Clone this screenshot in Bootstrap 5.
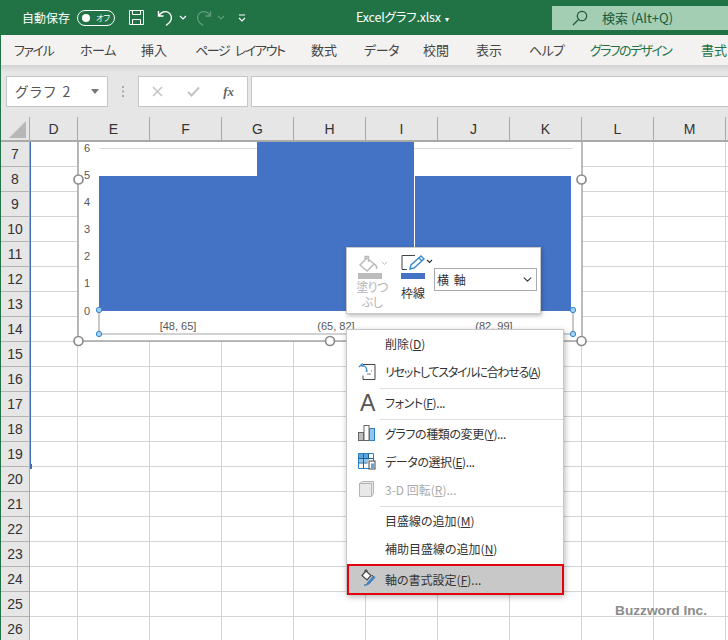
<!DOCTYPE html>
<html lang="ja"><head><meta charset="utf-8"><title>Excel</title>
<link href="https://cdn.jsdelivr.net/npm/bootstrap@5.3.0/dist/css/bootstrap.min.css" rel="stylesheet">
<style>
html,body{width:728px;height:640px;overflow:hidden}
body{background:#217346;font-family:"Noto Sans CJK JP","Noto Sans",sans-serif;font-feature-settings:"palt";color:#333;font-size:12px}
.xl-title{height:35px;color:#fff;padding-left:22px}
.xl-toggle{width:38px;height:16px;border:1px solid #fff;border-radius:8px;margin-left:7px;padding-left:4px;font-size:8px;gap:6px}
.xl-toggle i{width:8px;height:8px;border-radius:50%;background:#fff}
.xl-name{position:absolute;left:356px;top:8px;line-height:18px;font-size:12.5px;letter-spacing:-.2px}
.xl-search{position:absolute;left:552px;top:6px;width:176px;height:24px;background:#a3ceb4;color:#1f5a3a;padding-left:20px;gap:14px}
.xl-search span{font-size:13px}
.xl-tabs{height:30px;background:#f3f2f1;margin-left:1px;padding-left:13px;font-size:13px;white-space:nowrap;color:#444}
.xl-tabs span{flex:none}
.xl-tabs span:nth-child(1){width:66px;letter-spacing:-1.4px}
.xl-tabs span:nth-child(2){width:61px;letter-spacing:-.4px}
.xl-tabs span:nth-child(3){width:54px}
.xl-tabs span:nth-child(4){width:116px;letter-spacing:-1.4px;word-spacing:4px}
.xl-tabs span:nth-child(5){width:53px}
.xl-tabs span:nth-child(6){width:59px;letter-spacing:-.4px}
.xl-tabs span:nth-child(7){width:53px}
.xl-tabs span:nth-child(8){width:53px}
.xl-tabs span:nth-child(9){width:61px;letter-spacing:-.6px}
.xl-tabs span:nth-child(10){width:111px;letter-spacing:-1.6px}
.xl-tabs span.xl-green{color:#217346}
.xl-fbar{height:52px;margin-left:1px;background:linear-gradient(#d2d2d2,#e6e6e6 7px);padding:11px 0 10px 5px}
.xl-box{background:#fff;border:1px solid #c6c6c6;height:31px}
.xl-namebox{width:102px;padding:0 8px;font-size:14px;letter-spacing:2px;color:#555}
.xl-grip{width:30px;color:#999}
.xl-fx{width:110px;padding:0 13px 0 13px;color:#bbb}
.xl-input{margin-left:3px;flex:1;border-right:0}
.xl-heads{height:25px;margin-left:1px;background:#e6e6e6;border-bottom:2px solid #a9a9a9;font-size:14px;font-family:"Liberation Sans",sans-serif}
.xl-corner{width:29px;position:relative;border-right:1px solid #a9a9a9}
.xl-corner::after{content:"";position:absolute;left:8px;top:4px;border-style:solid;border-width:0 0 17px 17px;border-color:transparent transparent #b7b7b7 transparent}
.xl-col{width:72px;border-right:1px solid #a9a9a9;text-align:center;line-height:24px;flex:none}
.xl-col.xl-d{width:48px}
.xl-sheet{height:498px;margin-left:1px;background:#fff;position:relative;overflow:hidden}
.xl-rows{width:29px;background:#e6e6e6;border-right:1px solid #a9a9a9;font-family:"Liberation Sans",sans-serif;font-size:14px;flex:none}
.xl-rows div{height:25px;line-height:24px;text-align:center;border-bottom:1px solid #b4b4b4}
.xl-cells{flex:1;background-image:linear-gradient(90deg,#d4d4d4 1px,transparent 1px),linear-gradient(#d4d4d4 1px,transparent 1px);background-size:72px 25px;background-position:47px 0,0 24px}
.xl-chart{position:absolute;left:0;top:0}
.xl-chart text{font-family:"Liberation Sans",sans-serif;font-size:11px;fill:#595959}
.xl-mark{position:absolute;left:29px;top:0;width:1px;height:325px;background:#3f6fb5}
.xl-mark::after{content:"";position:absolute;left:0;top:322px;width:2px;height:5px;background:#3f6fb5}
.xl-mini{position:absolute;left:345px;top:105px;width:195px;height:67px;background:#fff;border:1px solid #c8c8c8;box-shadow:1px 2px 4px rgba(0,0,0,.25);padding:6px 3px 0 9px}
.xl-fill{width:32px;text-align:center;color:#b4b4b4;line-height:15px;margin-right:13px;white-space:nowrap;letter-spacing:-.6px}
.xl-fill svg,.xl-line svg{display:block}
.xl-fill div{height:15px}
.xl-line{width:33px;text-align:center;line-height:15px}
.xl-line div{margin-top:6px;margin-right:9px}
.xl-mini .form-select{width:103px;height:23px;margin:14px 0 0 0;padding:0 0 0 2px;border-radius:0;border-color:#aaa;font-size:12px;color:#333;letter-spacing:1px;background-position:right 3px center;background-size:11px 9px;font-family:inherit}
.xl-menu.dropdown-menu{display:block;position:absolute;left:345px;top:187px;width:218px;min-width:0;padding:0;border:1px solid #c6c6c6;border-radius:0;box-shadow:1px 2px 6px rgba(0,0,0,.28);font-size:12px;color:#333}
.xl-menu .dropdown-item{height:28px;padding:0 0 0 38px;line-height:28px;color:#333;position:relative;white-space:nowrap}
.xl-menu .dropdown-item.disabled{color:#aaa}
.xl-menu .xl-k{letter-spacing:-1.25px}
.xl-menu .xl-k2{letter-spacing:-.4px}
.xl-menu .dropdown-divider{margin:2px 0 0 33px;border-color:#ddd;height:1px}
.xl-menu .xl-hit{height:31px;line-height:27px;background:#c8c8c8;border:2px solid #e3000f;margin:1px -1px -1px 0;padding-left:36px;width:217px}
.xl-ico{position:absolute;left:11px;top:4px}
.xl-hit .xl-ico{left:10px;top:3px}
.xl-a{position:absolute;left:13px;top:0;font-size:23px;line-height:28px;font-family:"Liberation Sans",sans-serif;color:#555}
.xl-wm{position:absolute;left:614px;top:460px;font-family:"Liberation Sans",sans-serif;font-weight:700;font-size:13.7px;color:#8c8c8c;line-height:18px}
.xl-cursor{position:absolute;left:536px;top:434px}
.xl-fx i{font-family:"Liberation Serif",serif;font-weight:700;font-size:13px;color:#666}
.xl-name small{font-size:8px;margin-left:2px}
.xl-s1{margin-left:13px}.xl-s2{margin-left:12px}.xl-s3{margin-left:5px}.xl-s4{margin-left:8px}
</style></head>
<body>
<div class="xl-title d-flex align-items-center position-relative">
  <span>自動保存</span>
  <span class="xl-toggle d-flex align-items-center"><i></i><span>オフ</span></span>
  <svg class="xl-s1" width="17" height="17" viewBox="0 0 17 17" fill="none" stroke="#fff"><path d="M1.5 1.5h14v14h-14zM4.5 1.5v4h8v-4M4.5 15.500v-5h8v5"/></svg>
  <svg class="xl-s2" width="17" height="18" viewBox="0 0 17 18" fill="none" stroke="#fff" stroke-width="1.4"><path d="M1.500 2v5h5M1.800 6.800C4 3 8 1.500 11.500 3.500c3.500 2.200 4 6.600 1 10L9 16.500"/></svg>
  <svg class="xl-s3" width="8" height="5" viewBox="0 0 8 5" fill="none" stroke="#fff" stroke-width="1.200"><path d="M1 1l3 3 3-3"/></svg>
  <svg class="xl-s4" width="17" height="18" viewBox="0 0 17 18" fill="none" stroke="#5f9c7d" stroke-width="1.300"><path d="M15.500 2v5h-5M15.200 6.800C13 3 9 1.500 5.500 3.500c-3.500 2.200-4 6.600-1 10l3.500 3"/></svg>
  <svg class="xl-s3" width="8" height="5" viewBox="0 0 8 5" fill="none" stroke="#5f9c7d" stroke-width="1.200"><path d="M1 1l3 3 3-3"/></svg>
  <svg class="xl-s1" width="8" height="8" viewBox="0 0 8 8" fill="none" stroke="#fff" stroke-width="1.200"><path d="M1 1h6M1 4l3 3 3-3"/></svg>
  <span class="xl-name">Excelグラフ.xlsx <small>&#9662;</small></span>
  <div class="xl-search d-flex align-items-center">
    <svg width="16" height="16" viewBox="0 0 16 16" fill="none" stroke="#1f5a3a" stroke-width="1.200"><circle cx="10" cy="6" r="4.700"/><path d="M6.500 9.500L1 15"/></svg>
    <span>検索 (Alt+Q)</span>
  </div>
</div>
<nav class="xl-tabs d-flex align-items-center">
  <span>ファイル</span><span>ホーム</span><span>挿入</span><span>ページ レイアウト</span><span>数式</span><span>データ</span><span>校閲</span><span>表示</span><span>ヘルプ</span><span class="xl-green">グラフのデザイン</span><span class="xl-green">書式</span>
</nav>
<div class="xl-fbar d-flex">
  <div class="xl-box xl-namebox d-flex align-items-center justify-content-between"><span>グラフ 2</span><svg width="8" height="5" viewBox="0 0 8 5"><path d="M0 0h8L4 5z" fill="#777"/></svg></div>
  <div class="xl-grip d-flex align-items-center justify-content-center"><svg width="2" height="11" viewBox="0 0 2 11" fill="#aaa"><rect width="2" height="2"/><rect y="4.500" width="2" height="2"/><rect y="9" width="2" height="2"/></svg></div>
  <div class="xl-box xl-fx d-flex align-items-center justify-content-between">
    <svg width="11" height="11" viewBox="0 0 11 11" stroke="#c4c4c4" stroke-width="1.500"><path d="M1 1l9 9M10 1l-9 9"/></svg>
    <svg width="13" height="11" viewBox="0 0 13 11" fill="none" stroke="#c4c4c4" stroke-width="2"><path d="M1 6l3.500 3.500L12 1.500"/></svg>
    <i>fx</i>
  </div>
  <div class="xl-box xl-input"></div>
</div>
<div class="xl-heads d-flex">
  <div class="xl-corner"></div>
  <div class="xl-col xl-d">D</div><div class="xl-col">E</div><div class="xl-col">F</div><div class="xl-col">G</div><div class="xl-col">H</div><div class="xl-col">I</div><div class="xl-col">J</div><div class="xl-col">K</div><div class="xl-col">L</div><div class="xl-col">M</div>
</div>
<main class="xl-sheet d-flex">
  <div class="xl-rows">
    <div>7</div><div>8</div><div>9</div><div>10</div><div>11</div><div>12</div><div>13</div><div>14</div><div>15</div><div>16</div><div>17</div><div>18</div><div>19</div><div>20</div><div>21</div><div>22</div><div>23</div><div>24</div><div>25</div><div>26</div>
  </div>
  <div class="xl-cells"></div>
  <div class="xl-mark"></div>
  <svg class="xl-chart" width="727" height="498" viewBox="1 142 727 498">
    <rect x="78" y="130" width="504" height="211" fill="#fff" stroke="#a6a6a6" stroke-width="1.500"/>
    <path d="M99 148.500H573" stroke="#d9d9d9"/>
    <path d="M99 310V334H573V310" fill="none" stroke="#a6a6a6" stroke-width="1.200"/>
    <rect x="99" y="176" width="158" height="135" fill="#4472c4"/>
    <rect x="257" y="142" width="157" height="169" fill="#4472c4"/>
    <rect x="415" y="176" width="156" height="135" fill="#4472c4"/>
    <g text-anchor="middle">
      <text x="87" y="152">6</text><text x="87" y="179">5</text><text x="87" y="206">4</text><text x="87" y="233">3</text><text x="87" y="260">2</text><text x="87" y="287">1</text><text x="87" y="315">0</text>
      <text x="178" y="330">[48, 65]</text><text x="336" y="330">(65, 82]</text><text x="494" y="330">(82, 99]</text>
    </g>
    <g fill="#fff" stroke="#8a8a8a" stroke-width="1.700">
      <circle cx="78.500" cy="179.500" r="4.500"/><circle cx="78.500" cy="341" r="4.500"/><circle cx="330" cy="341" r="4.500"/><circle cx="581.500" cy="341" r="4.500"/><circle cx="581.500" cy="179.500" r="4.500"/>
    </g>
    <g fill="#9fd0f2" stroke="#3a8ad0">
      <circle cx="99" cy="310" r="2.700"/><circle cx="99" cy="334" r="2.700"/><circle cx="573" cy="310" r="2.700"/><circle cx="573" cy="334" r="2.700"/>
    </g>
  </svg>
  <div class="xl-mini d-flex">
    <div class="xl-fill">
      <svg width="32" height="25" viewBox="0 0 32 25"><path d="M4 11l7-7 7 6-7 7z" fill="#fff" stroke="#bbb" stroke-width="1.500"/><path d="M9 5V2.500h3.500V8" fill="none" stroke="#bbb" stroke-width="1.300"/><path d="M18 10c2 1 3 3 2.500 5" fill="none" stroke="#bbb" stroke-width="1.500"/><path d="M26 8l2.500 2.500L31 8" fill="none" stroke="#bbb"/><rect x="2" y="19" width="24" height="6" fill="#bcbcbc"/></svg>
      <div>塗りつ</div><div>ぶし</div>
    </div>
    <div class="xl-line">
      <svg width="33" height="25" viewBox="0 0 33 25"><path d="M1 15.500V1.500h13M1 15.500h5" fill="none" stroke="#444"/><path d="M9 15l1-4L20 2l3 3-10 9z" fill="#fff" stroke="#3b8bd0" stroke-width="1.400"/><path d="M18 4l3 3" stroke="#3b8bd0" stroke-width="1.400"/><path d="M26 6l2.500 2.500L31 6" fill="none" stroke="#333" stroke-width="1.100"/><rect x="0" y="19" width="24" height="6" fill="#4472c4"/></svg>
      <div>枠線</div>
    </div>
    <select class="form-select" aria-label="軸"><option>横 軸</option></select>
  </div>
  <div class="xl-menu dropdown-menu">
    <a class="dropdown-item">削除(<u>D</u>)</a>
    <a class="dropdown-item"><svg class="xl-ico" width="19" height="20" viewBox="0 0 19 20" fill="none"><path d="M5 2.500h12v15H5v-4" stroke="#444"/><path d="M9 9h1M13 9h1M9 12h4" stroke="#777"/><path d="M1 5l3-3v2h2a4 4 0 0 1 2 6" stroke="#3b8bd0" stroke-width="1.300"/></svg><span class="xl-k">リセットしてスタイルに合わせる(<u>A</u>)</span></a>
    <div class="dropdown-divider"></div>
    <a class="dropdown-item"><span class="xl-a">A</span><span class="xl-k2">フォント(<u>F</u>)...</span></a>
    <div class="dropdown-divider"></div>
    <a class="dropdown-item"><svg class="xl-ico" width="18" height="18" viewBox="0 0 18 18"><rect x=".5" y="8.500" width="5" height="8" fill="#bdbdbd" stroke="#666"/><rect x="6" y="1.500" width="5" height="15" fill="#fff" stroke="#666"/><rect x="11.500" y="4.500" width="5" height="12" fill="#8fc6ee" stroke="#2f80c2"/></svg><span class="xl-k2">グラフの種類の変更(<u>Y</u>)...</span></a>
    <a class="dropdown-item"><svg class="xl-ico" width="18" height="18" viewBox="0 0 18 18" fill="none"><path d="M.5 1.500h15v15H.5z" stroke="#2f80c2"/><rect x="1" y="2" width="9" height="4" fill="#5aa7e0"/><rect x="1" y="7" width="9" height="3.500" fill="#8fc6ee"/><path d="M5.500 1.500v15M.5 6.500h15M.5 11h9M10.500 1.500v6" stroke="#1f5f95"/><rect x="11" y="9" width="6" height="8" fill="#fff" stroke="#444"/><rect x="13" y="11.500" width="3" height="5" fill="#5aa7e0"/></svg><span class="xl-k2">データの選択(<u>E</u>)...</span></a>
    <a class="dropdown-item disabled"><svg class="xl-ico" width="18" height="18" viewBox="0 0 18 18"><path d="M1.500 3.500l3-2h11v12l-2 3h-12z" fill="#e8e8e8" stroke="#b5b5b5"/><path d="M1.500 3.500h12v13" fill="none" stroke="#b5b5b5"/></svg>3-D 回転(<u>R</u>)...</a>
    <div class="dropdown-divider"></div>
    <a class="dropdown-item">目盛線の追加(<u>M</u>)</a>
    <a class="dropdown-item">補助目盛線の追加(<u>N</u>)</a>
    <a class="dropdown-item xl-hit"><svg class="xl-ico" width="18" height="18" viewBox="0 0 18 18" fill="none"><path d="M3 6.500l4-4.500 5 4.500-4 4.500z" fill="#fff" stroke="#444" stroke-width="1.200"/><path d="M6 3V1h2v2" stroke="#444"/><path d="M13 6c1.500 1 1.500 2.500 1 3.500" stroke="#444"/><path d="M5 16c2.500 0 3-1 3.500-2.500l6-6.500 1.500 1.500-6 6.500c-1.500 1-3 1.500-5 1z" fill="#3b8bd0" stroke="#2f70ad" stroke-width=".7"/></svg>軸の書式設定(<u>F</u>)...</a>
  </div>
  <span class="xl-wm">Buzzword Inc.</span>
  <svg class="xl-cursor" width="13" height="20" viewBox="0 0 13 20"><path d="M1 1v14l3.500-3 2.500 6 2.500-1-2.500-5.500H12z" fill="#fff" stroke="#222"/></svg>
</main>
</body></html>
